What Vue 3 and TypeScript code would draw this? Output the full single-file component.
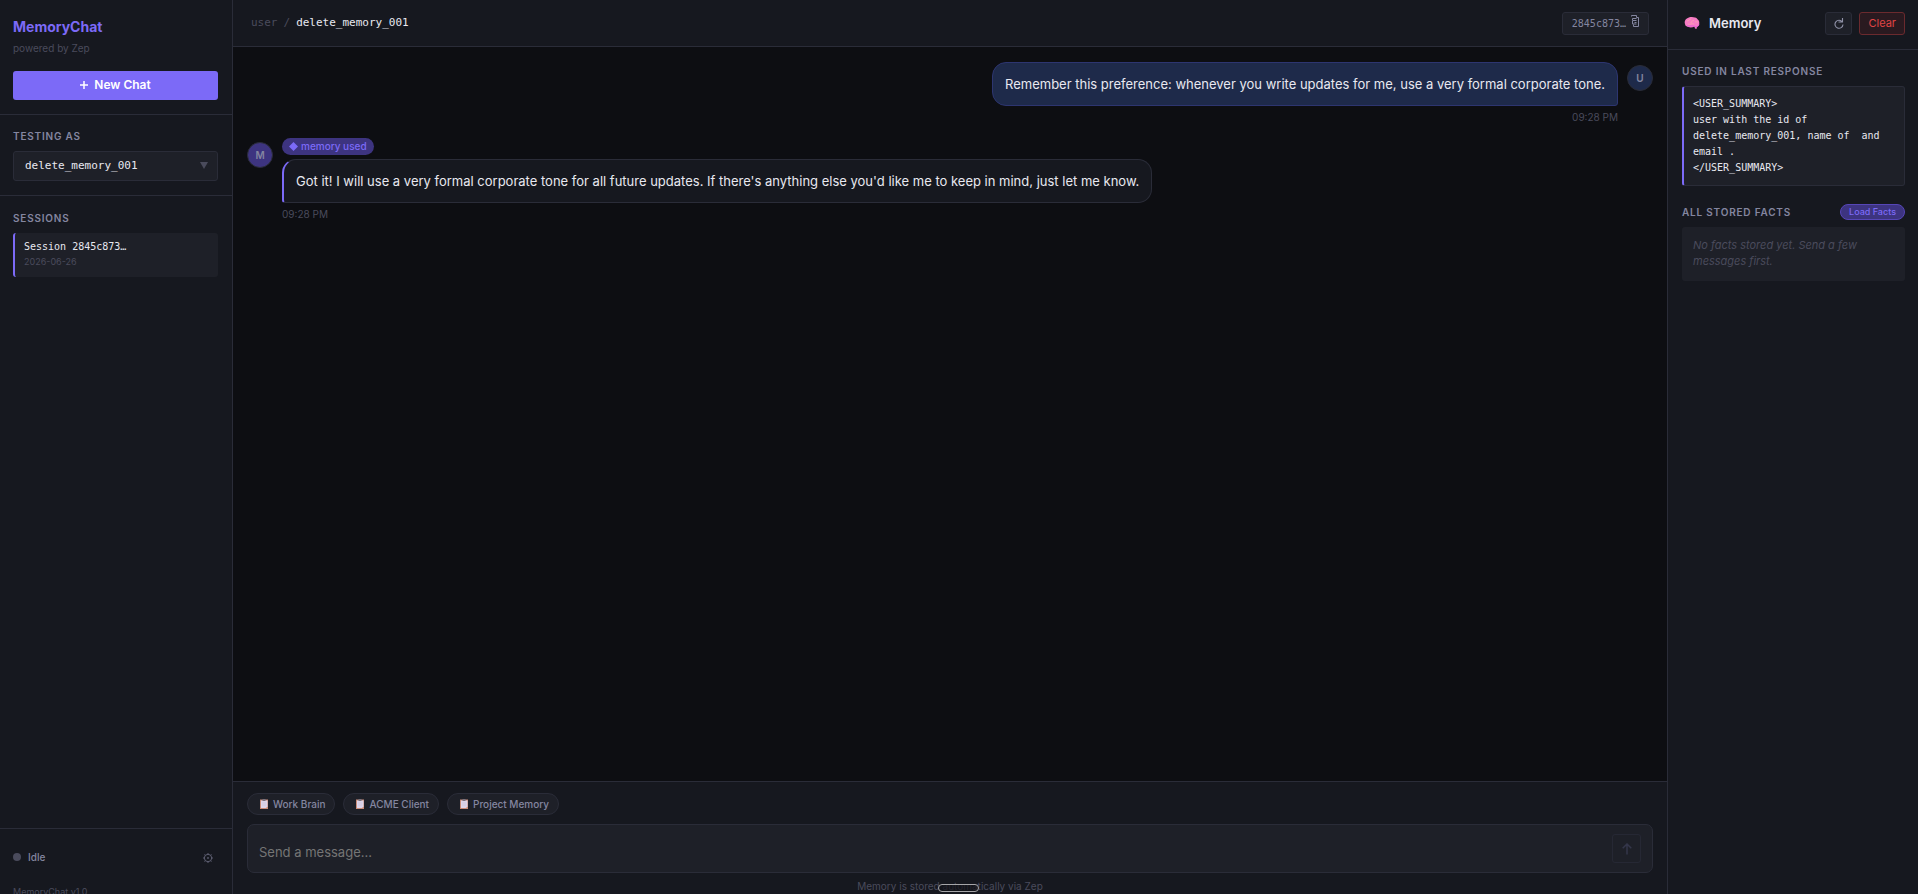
<script setup lang="ts">
import { ref } from 'vue'

interface Message {
  id: number
  role: 'user' | 'bot'
  text: string
  time: string
}

const users: string[] = ['delete_memory_001']
const currentUser = ref<string>('delete_memory_001')
const draft = ref<string>('')
const templates: string[] = ['Work Brain', 'ACME Client', 'Project Memory']
const messages: Message[] = [
  {
    id: 1,
    role: 'user',
    text: 'Remember this preference: whenever you write updates for me, use a very formal corporate tone.',
    time: '09:28 PM',
  },
  {
    id: 2,
    role: 'bot',
    text: "Got it! I will use a very formal corporate tone for all future updates. If there's anything else you'd like me to keep in mind, just let me know.",
    time: '09:28 PM',
  },
]
const summary = `<USER_SUMMARY>
user with the id of
delete_memory_001, name of  and
email .
</USER_SUMMARY>`
</script>

<template>
  <div class="app">
    <div class="shell">
      <aside class="sidebar">
        <div class="brand">
          <h1>MemoryChat</h1>
          <p>powered by Zep</p>
          <button type="button" class="new-chat">
            <svg width="8" height="8" viewBox="0 0 8 8" aria-hidden="true"><path d="M4 0v8M0 4h8" stroke="#fff" stroke-width="1.5" /></svg>
            New Chat
          </button>
        </div>
        <div class="tester">
          <label class="caption" for="tester">Testing as</label>
          <div class="select-wrap">
            <select id="tester" v-model="currentUser">
              <option v-for="u in users" :key="u" :value="u">{{ u }}</option>
            </select>
            <svg class="caret" width="8" height="7" viewBox="0 0 8 7" aria-hidden="true"><path d="M0 0h8L4 7z" fill="#4a4b5c" /></svg>
          </div>
        </div>
        <div class="sessions">
          <h2 class="caption">Sessions</h2>
          <button type="button" class="session">
            <span class="session-name">Session 2845c873…</span>
            <span class="session-date">2026-06-26</span>
          </button>
        </div>
        <footer class="side-foot">
          <div class="status">
            <span class="dot"></span>
            <span>Idle</span>
            <button type="button" class="gear" aria-label="Settings">
              <svg width="10" height="10" viewBox="0 0 10 10" fill="none" stroke="#5c5d70">
                <circle cx="5" cy="5" r="3.7" />
                <path d="M5 0v1.5M5 8.5V10M0 5h1.5M8.5 5H10M1.5 1.5l1 1M7.5 7.5l1 1M8.5 1.5l-1 1M1.5 8.5l1-1" />
                <circle cx="5" cy="5" r=".6" />
              </svg>
            </button>
          </div>
          <p class="version">MemoryChat v1.0</p>
        </footer>
      </aside>

      <main class="chat">
        <header class="chat-head">
          <div class="crumbs"><span>user</span><span>/</span><strong>{{ currentUser }}</strong></div>
          <button type="button" class="session-chip">
            2845c873…
            <svg width="8" height="12" viewBox="0 0 8 12" fill="none" stroke="#8486a0" aria-hidden="true">
              <path d="M.5 1.5V.5h5v2h2v9h-5v-2M5.500 3.500h-4v1.500M5.500 5.500h-4v3.500h4M5.500 7.500h-2" />
            </svg>
          </button>
        </header>

        <section class="thread">
          <article v-for="m in messages" :key="m.id" class="msg" :class="m.role">
            <span class="avatar">{{ m.role === 'user' ? 'U' : 'M' }}</span>
            <div class="body">
              <span v-if="m.role === 'bot'" class="badge">
                <svg width="9" height="9" viewBox="0 0 8 8" aria-hidden="true"><path d="M4 0l4 4-4 4-4-4z" fill="#7c6af7" /></svg>
                memory used
              </span>
              <p class="bubble">{{ m.text }}</p>
              <time>{{ m.time }}</time>
            </div>
          </article>
        </section>

        <footer class="composer">
          <div class="chips">
            <button v-for="t in templates" :key="t" type="button" class="chip">
              <svg width="8" height="10" viewBox="0 0 8 10" aria-hidden="true">
                <path d="M0 .5h8V10H0z" fill="#c98c78" />
                <path d="M1 1.5h6.5v6L6 9H1z" fill="#ddd5ea" />
                <path d="M2.5 0h3v2h-3z" fill="#77727f" />
                <path d="M2 4h4M2 6h4" stroke="#c5bcd6" stroke-width=".5" />
              </svg>
              {{ t }}
            </button>
          </div>
          <form class="entry" @submit.prevent>
            <textarea v-model="draft" rows="1" placeholder="Send a message..." aria-label="Message"></textarea>
            <button type="submit" class="send" aria-label="Send">
              <svg width="10" height="12" viewBox="0 0 10 12" fill="none" stroke="#34364a" stroke-width="1.5"><path d="M5 11.5v-10M.7 5.300L5 1l4.300 4.300" /></svg>
            </button>
          </form>
          <p class="hint">Memory is stored automatically via Zep<span class="handle"></span></p>
        </footer>
      </main>

      <aside class="memory">
        <header class="mem-head">
          <svg width="16" height="14" viewBox="0 0 16 14" aria-hidden="true">
            <path d="M1 8C0 5 2 2.500 4 2 6 .5 8 1 9 1.200c2-.2 4 .6 4.500 2C15.300 4.300 15.700 7 15 8.500c0 1.200-1 2-2 2.100L12.500 13l-1.500-.5-.6-2C8 12 4 11.500 3 10.300 2 10.300 1.200 9.500 1 8z" fill="#f77cc4" />
            <path d="M3 5c2 0 2-2 4-2M7 7c0-2 2-2 3-3M4 8c2 1 4-1 6 0M11 6c1-.5 2 0 3 0" fill="none" stroke="#fb9fb2" />
            <path d="M3 10c3 0 6-.5 8 .5s3 0 4-2" fill="none" stroke="#e45dd8" />
          </svg>
          <h2>Memory</h2>
          <button type="button" class="refresh" aria-label="Refresh">
            <svg width="10" height="11" viewBox="0 0 10 11" fill="none" stroke="#9092a8" stroke-width="1.1"><path d="M8.300 4A4 4 0 1 0 9 6.500M8.500 0v4h-4" /></svg>
          </button>
          <button type="button" class="clear">Clear</button>
        </header>
        <div class="mem-body">
          <h3 class="caption">Used in last response</h3>
          <pre class="summary">{{ summary }}</pre>
          <div class="facts-head">
            <h3 class="caption">All stored facts</h3>
            <button type="button" class="load">Load Facts</button>
          </div>
          <p class="empty">No facts stored yet. Send a few messages first.</p>
        </div>
      </aside>
    </div>
  </div>
</template>

<style>
body { background: #0d0e12; }
</style>

<style scoped>
* { box-sizing: border-box; margin: 0; }
button, select, textarea { font: inherit; color: inherit; padding: 0; border: 0; background: none; }
button { cursor: pointer; }
svg { display: block; flex: none; }

.app {
  position: relative;
  height: 100vh;
  overflow: hidden;
  font: 13px/20px Inter, "Liberation Sans", sans-serif;
  color: #e8e8f0;
}
.shell {
  display: grid;
  grid-template-columns: 233px minmax(0, 1fr) 251px;
  height: calc(100vh + 12px);
}

.caption {
  display: block;
  font-size: 10px;
  line-height: 14px;
  font-weight: 600;
  letter-spacing: 0.08em;
  text-transform: uppercase;
  color: #8486a0;
}

.sidebar { display: flex; flex-direction: column; background: #16181f; border-right: 1px solid #2a2c38; }
.brand { padding: 18px 14px 14px 13px; border-bottom: 1px solid #2a2c38; }
.brand h1 { font-size: 14px; line-height: 18px; font-weight: 700; color: #7c6af7; }
.brand p { margin: 5px 0 16px; font-size: 10px; line-height: 14px; color: #4a4b5c; }
.new-chat {
  display: flex; align-items: center; justify-content: center; gap: 6px;
  width: 100%; height: 29px; padding-bottom: 1px; border-radius: 3px; background: #7c6af7;
  font-size: 12px; font-weight: 600; color: #fff;
}
.tester { padding: 14px 14px 14px 13px; border-bottom: 1px solid #2a2c38; }
.select-wrap { position: relative; margin-top: 8px; }
.select-wrap select {
  display: block; width: 100%; height: 30px; padding: 0 11px; appearance: none;
  border: 1px solid #2a2c38; border-radius: 3px; background: #1e2028;
  font-family: "DejaVu Sans Mono", monospace; font-size: 11px;
}
.caret { position: absolute; right: 10px; top: 11px; pointer-events: none; }
.sessions { flex: 1; padding: 15px 14px 16px 13px; }
.session {
  display: flex; flex-direction: column; align-items: flex-start;
  width: 100%; height: 44px; margin-top: 8px; padding: 6px 9px;
  border-left: 2px solid #7c6af7; border-radius: 3px; background: #1e2028;
}
.session-name { font: 10px/15px "DejaVu Sans Mono", monospace; }
.session-date { font-size: 9px; line-height: 16px; color: #4a4b5c; }
.side-foot { height: 78px; padding: 18px 14px 0 13px; border-top: 1px solid #2a2c38; }
.status { display: flex; align-items: center; gap: 7px; font-size: 10px; font-weight: 500; color: #8486a0; }
.dot { width: 8px; height: 8px; border-radius: 50%; background: #4a4b5c; }
.gear { margin-left: auto; padding: 2px 5px 0; }
.version { margin-top: 18px; font-size: 9px; line-height: 14px; color: #4a4b5c; }

.chat { display: flex; flex-direction: column; background: #0d0e12; }
.chat-head {
  display: flex; align-items: center; justify-content: space-between;
  height: 47px; padding: 0 18px; background: #16181f; border-bottom: 1px solid #2a2c38;
}
.crumbs { display: flex; gap: 6px; font: 11px/16px "DejaVu Sans Mono", monospace; color: #4a4b5c; }
.crumbs strong { font-weight: 400; color: #e8e8f0; }
.session-chip {
  display: flex; align-items: center; gap: 5px; height: 23px; padding: 0 9px;
  border: 1px solid #2a2c38; border-radius: 3px; background: #1e2028;
  font: 10px/15px "DejaVu Sans Mono", monospace; color: #8486a0;
}
.session-chip svg { margin-bottom: 4px; }
.thread { flex: 1; display: flex; flex-direction: column; gap: 15px; padding: 15px 14px; }
.msg { display: flex; gap: 9px; align-items: flex-start; }
.msg.user { flex-direction: row-reverse; }
.avatar {
  width: 26px; height: 26px; margin-top: 3px; border: 1px solid #2a2c38; border-radius: 50%;
  font-size: 10px; line-height: 24px; font-weight: 600; text-align: center; color: #8486a0; background: #1e2a4a;
}
.bot .avatar { background: #3d3480; }
.body { display: flex; flex-direction: column; align-items: flex-start; max-width: 72%; }
.user .body { align-items: flex-end; }
.badge {
  display: flex; align-items: center; gap: 3px; height: 17px; padding: 0 7px; margin: -1px 0 4px;
  border-radius: 9px; background: #3d3480; font-size: 10px; line-height: 17px; font-weight: 500; color: #7c6af7;
}
.bubble { padding: 11px 12px; border: 1px solid #2a2c38; border-radius: 14px; background: #16181f; font-size: 13px; line-height: 20px; }
.user .bubble { background: #1e2a4a; border-color: #2d3570; border-bottom-right-radius: 3px; }
.bot .bubble { border-left: 2px solid #7c6af7; border-bottom-left-radius: 3px; }
.body time { margin-top: 4px; font-size: 10px; line-height: 14px; color: #4a4b5c; }

.composer { padding: 11px 14px 13px; background: #16181f; border-top: 1px solid #2a2c38; }
.chips { display: flex; gap: 8px; }
.chip {
  display: flex; align-items: center; gap: 5px; height: 22px; padding: 0 9px 0 12px;
  border: 1px solid #2a2c38; border-radius: 11px; background: #1e2028;
  font-size: 10px; font-weight: 500; color: #8486a0;
}
.entry {
  display: flex; align-items: center; height: 49px; margin-top: 9px; padding: 0 11px;
  border: 1px solid #2a2c38; border-radius: 7px; background: #1e2028;
}
.entry textarea { flex: 1; height: 22px; resize: none; outline: 0; line-height: 22px; margin-top: 6px; }
.entry textarea::placeholder { color: #757575; }
.send {
  display: flex; align-items: center; justify-content: center; width: 29px; height: 29px;
  border: 1px solid #262834; border-radius: 3px;
}
.hint { position: relative; margin-top: 6px; font-size: 10px; line-height: 14px; text-align: center; color: #4a4b5c; }
.handle {
  position: absolute; left: 50%; top: 5px; width: 41px; height: 8px; margin-left: -12px;
  border: 1px solid #a5a5a8; border-radius: 4px; background: rgba(18, 19, 24, 0.7);
}

.memory { background: #16181f; border-left: 1px solid #2a2c38; }
.mem-head { display: flex; align-items: center; height: 50px; padding: 0 13px 3px 16px; border-bottom: 1px solid #2a2c38; }
.mem-head h2 { margin: 0 auto 0 9px; font-size: 13px; font-weight: 600; }
.refresh {
  display: flex; align-items: center; justify-content: center; width: 27px; height: 23px; margin-right: 7px;
  border: 1px solid #2a2c38; border-radius: 3px; background: #1e2028;
}
.clear { height: 23px; padding: 0 8px; border: 1px solid #6b2a2e; border-radius: 3px; background: #2a1a20; font-size: 11px; color: #e04545; }
.mem-body { padding: 14px 13px 15px 14px; }
.summary {
  margin: 8px 0 18px; padding: 9px; border: 1px solid #2a2c38; border-left: 2px solid #7c6af7; border-radius: 3px;
  background: #1e2028; font: 10px/16px "DejaVu Sans Mono", monospace; white-space: pre-wrap;
}
.facts-head { display: flex; align-items: center; justify-content: space-between; }
.load { height: 16px; padding: 0 8px; border: 1px solid #5646b8; border-radius: 8px; background: #3d3480; font-size: 9px; line-height: 14px; font-weight: 500; color: #7c6af7; }
.empty { margin-top: 7px; padding: 10px 11px 12px; border-radius: 3px; background: #1e2028; font-size: 11px; line-height: 16px; font-style: italic; color: #4a4b5c; }
</style>
